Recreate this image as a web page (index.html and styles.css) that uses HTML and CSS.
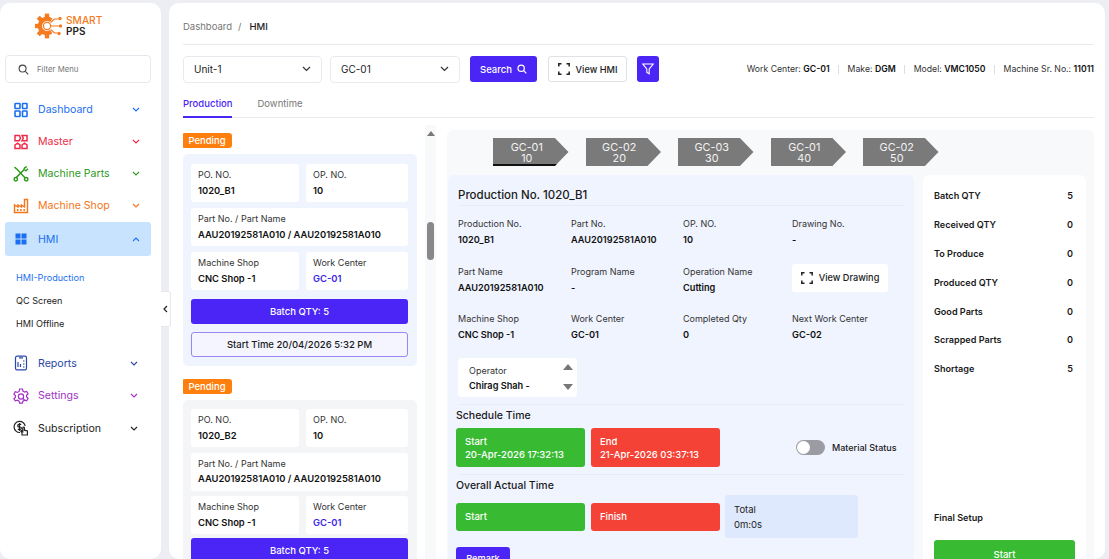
FILE: index.html
```html
<!DOCTYPE html>
<html lang="en">
<head>
<meta charset="utf-8">
<title>HMI</title>
<link rel="stylesheet" href="styles.css">
</head>
<body>
<div class="app">
  <aside class="sidebar">
    <div class="logo">
      <svg class="logo-mark" width="28" height="26" viewBox="0 0 28 26"><g fill="#f47b20"><rect x="9.8" y=".6" width="4.4" height="5"/><rect x="9.8" y=".6" width="4.4" height="5" transform="rotate(-45 12 13)"/><rect x="9.8" y=".6" width="4.4" height="5" transform="rotate(-90 12 13)"/><rect x="9.8" y=".6" width="4.4" height="5" transform="rotate(-135 12 13)"/><rect x="9.8" y=".6" width="4.4" height="5" transform="rotate(180 12 13)"/></g><circle cx="12" cy="13" r="7.2" fill="none" stroke="#f47b20" stroke-width="4.4" stroke-dasharray="70 30" pathLength="100" transform="rotate(54 12 13)"/><circle cx="12" cy="13" r="3.6" fill="#fff" stroke="#f47b20" stroke-width="1.2"/><path d="M16 13h8M15.500 9.500l4-3.500h4M15.500 16.500l4 3.500h3" fill="none" stroke="#f47b20" stroke-width="1.2"/><circle cx="25" cy="5.500" r="1.700" fill="#f47b20"/><circle cx="25.500" cy="13" r="1.700" fill="#f47b20"/><circle cx="24" cy="20.500" r="1.700" fill="#f47b20"/></svg>
      <div class="logo-text"><span class="logo-smart">SMART</span><span class="logo-pps">PPS</span></div>
    </div>
    <div class="filter-menu">
      <svg width="11" height="11" viewBox="0 0 12 12" fill="none" stroke="#444" stroke-width="1.2"><circle cx="5" cy="5" r="3.8"/><path d="M8 8l3.2 3.2"/></svg>
      <span>Filter Menu</span>
    </div>
    <nav class="nav">
      <div class="nav-item blue">
        <svg class="nav-icon" viewBox="0 0 16 16" fill="none" stroke="currentColor" stroke-width="1.6"><rect x="2" y="1.500" width="5" height="5" rx=".6"/><rect x="9.500" y="1.500" width="4.500" height="5" rx=".6"/><rect x="2" y="9" width="5" height="5.500" rx=".6"/><rect x="9.500" y="9" width="4.500" height="5.500" rx=".6"/></svg>
        <span>Dashboard</span>
        <svg class="chev" viewBox="0 0 8 5" fill="none" stroke="currentColor" stroke-width="1.1"><path d="M1 1l3 3 3-3"/></svg>
      </div>
      <div class="nav-item red">
        <svg class="nav-icon" viewBox="0 0 16 16" fill="none" stroke="currentColor" stroke-width="1.5"><path d="M2 1.500h4.200L7.500 4 6.200 6.800H2zM9 1.500h5v5.300H9l1.300-2.800zM2 11l2.500-1.800L7 11v3.500H2zM9 11l2.500-1.800L14 11v3.500H9z"/></svg>
        <span>Master</span>
        <svg class="chev" viewBox="0 0 8 5" fill="none" stroke="currentColor" stroke-width="1.1"><path d="M1 1l3 3 3-3"/></svg>
      </div>
      <div class="nav-item green">
        <svg class="nav-icon" viewBox="0 0 16 16" fill="none" stroke="currentColor" stroke-width="1.5"><path d="M1.500 1.200l2.800 2.300L12 11.800M13.800 1c-1.600-.2-3 1.100-2.800 2.700l-7.800 7.900"/><path d="M11.500 3.800l1.300 1 2.200-2" stroke-width="1.300"/><circle cx="2.800" cy="13.300" r="1.700"/><circle cx="13.200" cy="13.300" r="1.700"/></svg>
        <span>Machine Parts</span>
        <svg class="chev" viewBox="0 0 8 5" fill="none" stroke="currentColor" stroke-width="1.1"><path d="M1 1l3 3 3-3"/></svg>
      </div>
      <div class="nav-item orange">
        <svg class="nav-icon" viewBox="0 0 16 16" fill="none" stroke="currentColor" stroke-width="1.4"><path d="M1.500 14.500V7l3.500 2V7l3.500 2V7l3 2V1.500h3v13z"/><path d="M4 12h1.500M7.200 12h1.500M10.400 12h1.500" stroke-width="2"/></svg>
        <span>Machine Shop</span>
        <svg class="chev" viewBox="0 0 8 5" fill="none" stroke="currentColor" stroke-width="1.1"><path d="M1 1l3 3 3-3"/></svg>
      </div>
      <div class="nav-item blue active">
        <svg class="nav-icon" viewBox="0 0 16 16" fill="currentColor"><rect x="2.500" y="2.500" width="5" height="5"/><rect x="8.500" y="2.500" width="5" height="5"/><rect x="2.500" y="8.500" width="5" height="5"/><rect x="8.500" y="8.500" width="5" height="5"/></svg>
        <span>HMI</span>
        <svg class="chev" viewBox="0 0 8 5" fill="none" stroke="currentColor" stroke-width="1.1"><path d="M1 4l3-3 3 3"/></svg>
      </div>
      <div class="subnav">
        <a class="sub current">HMI-Production</a>
        <a class="sub">QC Screen</a>
        <a class="sub">HMI Offline</a>
      </div>
      <div class="nav-item navy tight">
        <svg class="nav-icon" viewBox="0 0 16 16" fill="none" stroke="currentColor" stroke-width="1.2"><rect x="2.500" y="1.200" width="11" height="13.600" rx="1.600"/><path d="M5 7v5M7.500 9v3M10 6h1.500M10 9h1.500M10 12h1.500M6 2.800h4"/></svg>
        <span>Reports</span>
        <svg class="chev" viewBox="0 0 8 5" fill="none" stroke="currentColor" stroke-width="1.1"><path d="M1 1l3 3 3-3"/></svg>
      </div>
      <div class="nav-item purple tight">
        <svg class="nav-icon" viewBox="0 0 16 16" fill="none" stroke="currentColor" stroke-width="1.2"><path d="M6.600 1h2.800l.5 2 1.800 1 2-.6 1.400 2.400-1.500 1.400v1.800l1.500 1.400-1.400 2.400-2-.6-1.800 1-.5 2H6.600l-.5-2-1.800-1-2 .6L.9 10.800l1.500-1.400V7.600L.9 6.200l1.400-2.400 2 .6 1.800-1z"/><circle cx="8" cy="8.500" r="2.600"/><path d="M9.800 10.400l2 2"/></svg>
        <span>Settings</span>
        <svg class="chev" viewBox="0 0 8 5" fill="none" stroke="currentColor" stroke-width="1.1"><path d="M1 1l3 3 3-3"/></svg>
      </div>
      <div class="nav-item ink tight">
        <svg class="nav-icon" viewBox="0 0 16 16" fill="none" stroke="currentColor" stroke-width="1.2"><path d="M7 12.500A5.600 5.600 0 1 1 12.200 6"/><path d="M8.200 4.400H6a1.200 1.200 0 0 0 0 2.600h1.200a1.200 1.200 0 0 1 0 2.400H4.800M6.500 3v8"/><path d="M9 15v-2L7.800 11.200l.8-.6 1.200 1V7.800a.8.8 0 0 1 1.600 0v2.400l3 .7v4.100z" fill="#fff"/></svg>
        <span>Subscription</span>
        <svg class="chev" viewBox="0 0 8 5" fill="none" stroke="currentColor" stroke-width="1.1"><path d="M1 1l3 3 3-3"/></svg>
      </div>
    </nav>
  </aside>
  <div class="collapse">
    <svg width="5" height="8" viewBox="0 0 5 8" fill="none" stroke="#222" stroke-width="1.2"><path d="M4 1L1 4l3 3"/></svg>
  </div>

  <main class="main">
    <div class="crumbs"><span class="crumb-link">Dashboard</span><span class="crumb-sep">/</span><span class="crumb-now">HMI</span></div>

    <div class="toolbar">
      <div class="select unit"><span>Unit-1</span><svg width="9" height="6" viewBox="0 0 9 6" fill="none" stroke="#333" stroke-width="1.2"><path d="M1 1l3.500 3.500L8 1"/></svg></div>
      <div class="select gc"><span>GC-01</span><svg width="9" height="6" viewBox="0 0 9 6" fill="none" stroke="#333" stroke-width="1.2"><path d="M1 1l3.500 3.500L8 1"/></svg></div>
      <button class="btn-search">Search<svg width="10" height="10" viewBox="0 0 12 12" fill="none" stroke="#fff" stroke-width="1.5"><circle cx="5" cy="5" r="3.8"/><path d="M8 8l3.200 3.200"/></svg></button>
      <button class="btn-view"><svg width="12" height="12" viewBox="0 0 12 12" fill="none" stroke="#222" stroke-width="1.5"><path d="M.8 3.500V.8h2.700M8.500.8h2.700v2.700M11.200 8.500v2.700H8.500M3.500 11.200H.8V8.500"/></svg>View HMI</button>
      <button class="btn-filter"><svg width="12" height="12" viewBox="0 0 12 12" fill="none" stroke="#fff" stroke-width="1.1"><path d="M.8 1h10.400L7.200 6v4.800L4.800 9.400V6z"/></svg></button>
      <div class="machine-info">
        <span>Work Center: <b>GC-01</b></span><i></i>
        <span>Make: <b>DGM</b></span><i></i>
        <span>Model: <b>VMC1050</b></span><i></i>
        <span>Machine Sr. No.: <b>11011</b></span>
      </div>
    </div>

    <div class="tabs">
      <span class="tab on">Production</span>
      <span class="tab">Downtime</span>
    </div>

    <div class="content">
      <section class="list">
        <span class="badge">Pending</span>
        <article class="job first">
          <div class="cells">
            <div class="cell"><label>PO. NO.</label><strong>1020_B1</strong></div>
            <div class="cell"><label>OP. NO.</label><strong>10</strong></div>
            <div class="cell full"><label>Part No. / Part Name</label><strong>AAU20192581A010 / AAU20192581A010</strong></div>
            <div class="cell"><label>Machine Shop</label><strong>CNC Shop -1</strong></div>
            <div class="cell"><label>Work Center</label><strong class="link">GC-01</strong></div>
          </div>
          <div class="batch">Batch QTY: 5</div>
          <div class="start-time">Start Time 20/04/2026 5:32 PM</div>
        </article>
        <span class="badge second">Pending</span>
        <article class="job next">
          <div class="cells">
            <div class="cell"><label>PO. NO.</label><strong>1020_B2</strong></div>
            <div class="cell"><label>OP. NO.</label><strong>10</strong></div>
            <div class="cell full"><label>Part No. / Part Name</label><strong>AAU20192581A010 / AAU20192581A010</strong></div>
            <div class="cell"><label>Machine Shop</label><strong>CNC Shop -1</strong></div>
            <div class="cell"><label>Work Center</label><strong class="link">GC-01</strong></div>
          </div>
          <div class="batch">Batch QTY: 5</div>
        </article>
      </section>

      <div class="scroll"><span class="scroll-up"></span><span class="scroll-thumb"></span></div>

      <section class="panel">
        <div class="flow">
          <div class="step current">GC-01<br>10</div>
          <div class="step">GC-02<br>20</div>
          <div class="step">GC-03<br>30</div>
          <div class="step">GC-01<br>40</div>
          <div class="step">GC-02<br>50</div>
        </div>
        <div class="panel-body">
          <div class="prod">
            <h2>Production No. 1020_B1</h2>
            <div class="facts">
              <div class="fact"><label>Production No.</label><strong>1020_B1</strong></div>
              <div class="fact"><label>Part No.</label><strong>AAU20192581A010</strong></div>
              <div class="fact"><label>OP. NO.</label><strong>10</strong></div>
              <div class="fact"><label>Drawing No.</label><strong>-</strong></div>
              <div class="fact"><label>Part Name</label><strong>AAU20192581A010</strong></div>
              <div class="fact"><label>Program Name</label><strong>-</strong></div>
              <div class="fact"><label>Operation Name</label><strong>Cutting</strong></div>
              <div class="fact"><button class="btn-drawing"><svg width="12" height="12" viewBox="0 0 12 12" fill="none" stroke="#222" stroke-width="1.5"><path d="M.8 3.500V.8h2.700M8.500.8h2.700v2.700M11.200 8.500v2.700H8.500M3.500 11.200H.8V8.500"/></svg>View Drawing</button></div>
              <div class="fact"><label>Machine Shop</label><strong>CNC Shop -1</strong></div>
              <div class="fact"><label>Work Center</label><strong>GC-01</strong></div>
              <div class="fact"><label>Completed Qty</label><strong>0</strong></div>
              <div class="fact"><label>Next Work Center</label><strong>GC-02</strong></div>
            </div>
            <div class="operator">
              <div class="op-text"><label>Operator</label><strong>Chirag Shah -</strong></div>
              <div class="op-arrows"><span class="tri-up"></span><span class="tri-down"></span></div>
            </div>
            <hr class="rule">
            <h3>Schedule Time</h3>
            <div class="times">
              <div class="time green-bg"><span>Start</span><span>20-Apr-2026 17:32:13</span></div>
              <div class="time red-bg"><span>End</span><span>21-Apr-2026 03:37:13</span></div>
              <div class="material"><span class="toggle"><span class="knob"></span></span><span class="material-label">Material Status</span></div>
            </div>
            <hr class="rule">
            <h3>Overall Actual Time</h3>
            <div class="times actual">
              <div class="time short green-bg"><span>Start</span></div>
              <div class="time short red-bg"><span>Finish</span></div>
              <div class="total"><label>Total</label><span>0m:0s</span></div>
            </div>
            <button class="btn-remark">Remark</button>
          </div>
          <aside class="stats">
            <div class="stat"><span>Batch QTY</span><span>5</span></div>
            <div class="stat"><span>Received QTY</span><span>0</span></div>
            <div class="stat"><span>To Produce</span><span>0</span></div>
            <div class="stat"><span>Produced QTY</span><span>0</span></div>
            <div class="stat"><span>Good Parts</span><span>0</span></div>
            <div class="stat"><span>Scrapped Parts</span><span>0</span></div>
            <div class="stat"><span>Shortage</span><span>5</span></div>
            <div class="final">Final Setup</div>
            <button class="btn-start">Start</button>
          </aside>
        </div>
      </section>
    </div>
  </main>
</div>
</body>
</html>
```

FILE: styles.css
```css
* { box-sizing: border-box; }
html, body { margin: 0; height: 100%; overflow: hidden; }
body { background: #eceef3; font-family: Inter, "Liberation Sans", sans-serif; color: #1a1a1a; font-size: 10px; }
label { display: block; font-weight: 400; }
button { font-family: inherit; border: 0; padding: 0; }

.app { position: relative; display: flex; gap: 8px; height: 559px; padding: 3px 4px 0 0; overflow: hidden; }

/* sidebar */
.sidebar { flex: 0 0 161px; background: #fff; border-radius: 10px; padding: 7px 10px 0 5px; height: 556px; }
.logo { display: flex; align-items: center; gap: 3px; height: 34px; padding: 0 0 3px 30px; }
.logo-text { display: flex; flex-direction: column; line-height: 11px; font-size: 10.2px; }
.logo-smart { color: #f47b20; font-weight: 500; }
.logo-pps { color: #222; font-weight: 600; font-size: 10px; }
.filter-menu { display: flex; align-items: center; gap: 8px; height: 28px; margin: 11px 0 0; padding-left: 12px; border: 1px solid #e6e8ee; border-radius: 4px; font-size: 7.8px; color: #777; }
.nav { margin-top: 10.5px; }
.nav-item { display: flex; align-items: center; height: 32px; padding: 0 11px 0 8px; font-size: 10.6px; }
.nav-item span { flex: 1; margin-left: 9px; }
.nav-icon { width: 16px; height: 16px; flex: none; }
.chev { width: 8px; height: 5px; flex: none; }
.blue { color: #1b6ff2; }
.red { color: #ee2b4b; }
.green { color: #2f9a1e; }
.orange { color: #f5761a; }
.navy { color: #2b48a8; }
.purple { color: #a031c4; }
.ink { color: #222; }
.active { height: 34px; margin-top: .5px; background: #c7e3fd; border-radius: 3px; }
.tight { height: 32.5px; padding-right: 13px; }
.subnav { display: flex; flex-direction: column; gap: 8px; padding: 14px 0 0 11px; height: 91px; font-size: 9.1px; }
.sub { line-height: 15px; color: #222; }
.subnav .current { color: #1b6ff2; }
.collapse { position: absolute; left: 161px; top: 291px; width: 10px; height: 36px; display: flex; align-items: center; justify-content: center; background: #fff; border: 1px solid #e6e8ee; border-left: 0; border-radius: 0 3px 3px 0; }

/* main */
.main { flex: 1; min-width: 0; height: 556px; background: #fff; border-radius: 10px; padding: 0 11px 0 14px; overflow: hidden; }
.crumbs { display: flex; align-items: center; gap: 6px; height: 42px; border-bottom: 1px solid #e8eaef; padding-top: 5px; font-size: 9.5px; }
.crumb-link, .crumb-sep { color: #777; }
.crumb-now { font-weight: 500; color: #222; margin-left: 2px; }
.toolbar { display: flex; align-items: center; margin-top: 10px; height: 28px; }
.select { display: flex; align-items: center; justify-content: space-between; height: 27px; padding: 0 10px; background: #fff; border: 1px solid #e8eaef; border-radius: 4px; font-size: 10px; color: #222; }
.unit { width: 139px; }
.gc { width: 130px; margin-left: 8px; }
.btn-search { display: flex; align-items: center; justify-content: center; gap: 5px; width: 67px; height: 26px; margin-left: 10px; background: #4a25f5; color: #fff; border-radius: 3px; font-size: 9.5px; font-weight: 500; }
.btn-view { display: flex; align-items: center; justify-content: center; gap: 6px; width: 79px; height: 26px; margin-left: 11px; background: #fff; color: #222; border: 1px solid #dfe1e6; border-radius: 3px; font-size: 9.2px; font-weight: 500; }
.btn-filter { display: flex; align-items: center; justify-content: center; width: 22px; height: 26px; margin-left: 10px; background: #4a25f5; border-radius: 3px; }
.machine-info { flex: 1; display: flex; justify-content: flex-end; align-items: center; gap: 8.5px; font-size: 8.7px; color: #333; }
.machine-info b { font-weight: 600; color: #111; }
.machine-info i { width: 1px; height: 9px; background: #ddd; }
.tabs { display: flex; gap: 25px; height: 29px; margin-top: 6px; border-bottom: 1px solid #e8eaef; font-size: 9.5px; color: #777; }
.tab { padding-top: 9px; height: 29px; }
.on { color: #4a25f5; font-weight: 500; border-bottom: 2px solid #4a25f5; }

.content { display: flex; height: 441px; }
.list { width: 234px; padding-top: 15px; overflow: hidden; }
.badge { display: block; width: 50px; height: 15px; margin-left: -1px; background: #ff7f0e; color: #fff; border-radius: 3px; font-size: 9.5px; font-weight: 500; line-height: 15px; text-align: center; }
.second { margin-top: 13px; }
.job { margin-top: 6px; padding: 10px 9px 9px 8px; background: #f4f5f7; border-radius: 5px; }
.first { background: #f0f4ff; height: 212px; }
.next { padding-top: 9px; height: 200px; }
.cells { display: grid; grid-template-columns: 108px 102px; gap: 6px 7px; }
.next .cells { row-gap: 5.5px; }
.cell { height: 38px; padding: 3px 7px; background: #fff; border-radius: 3px; font-size: 9px; line-height: 15.5px; color: #333; }
.cell strong { display: block; font-size: 9.4px; font-weight: 600; color: #111; white-space: nowrap; }
.cell .link { color: #3a25e8; }
.full { grid-column: 1 / -1; }
.batch { height: 25px; margin-top: 9px; background: #4a25f5; color: #fff; border-radius: 3px; font-size: 9.5px; font-weight: 500; line-height: 25px; text-align: center; }
.next .batch { margin-top: 4px; }
.start-time { height: 25px; margin-top: 8px; background: #f4f5ff; border: 1px solid #9a85f5; border-radius: 3px; font-size: 9.5px; font-weight: 500; line-height: 23px; text-align: center; }

.scroll { display: flex; flex-direction: column; align-items: center; width: 11px; margin: 7px 11px 0 8px; background: #f8f9fb; }
.scroll-up { width: 0; height: 0; margin-top: 6px; border: 4px solid transparent; border-top: 0; border-bottom: 5px solid #777; }
.scroll-thumb { width: 7px; height: 38px; margin-top: 86px; background: #888; border-radius: 4px; }

.panel { flex: 1; min-width: 0; margin-top: 12px; padding: 8px 8px 0 1px; background: #f7f9fb; border-radius: 6px 6px 0 0; }
.flow { display: flex; gap: 17px; height: 28px; padding-left: 45px; }
.step { width: 75.5px; height: 28px; padding: 3.5px 8px 0 0; background: #7a7a7a; color: #f2f2f2; font-size: 10.8px; line-height: 11px; text-align: center; clip-path: polygon(0 0, 82% 0, 100% 50%, 82% 100%, 0 100%); }
.step.current { border-bottom: 2px solid #111; }
.panel-body { display: flex; gap: 9px; margin-top: 9px; }
.prod { width: 466px; height: 400px; padding: 10px 10px 0 10px; background: #f0f4ff; border-radius: 6px; }
.prod h2 { margin: 0; height: 21px; font-size: 11.5px; font-weight: 500; line-height: 20px; color: #1a1a1a; border-bottom: 1px solid #e8ecf5; }
.facts { display: grid; grid-template-columns: 113px 112px 109px 1fr; grid-auto-rows: 32px; row-gap: 15.5px; margin-top: 10px; font-size: 9px; }
.fact { line-height: 16px; color: #333; }
.fact strong { display: block; font-size: 9.2px; font-weight: 600; color: #111; white-space: nowrap; }
.btn-drawing { display: flex; align-items: center; justify-content: center; gap: 6px; width: 96px; height: 28px; background: #fff; border-radius: 3px; color: #222; font-size: 9.2px; font-weight: 500; }
.operator { display: flex; justify-content: space-between; width: 119px; height: 39px; margin-top: 15px; padding: 5px 4px 0 11px; background: #fff; border-radius: 4px; font-size: 9px; line-height: 15px; color: #333; }
.operator strong { display: block; font-size: 9.2px; font-weight: 600; color: #111; }
.op-arrows { display: flex; flex-direction: column; gap: 14px; padding-top: 1px; }
.tri-up { width: 0; height: 0; border: 5px solid transparent; border-top: 0; border-bottom: 6px solid #777; }
.tri-down { width: 0; height: 0; border: 5px solid transparent; border-bottom: 0; border-top: 6px solid #777; }
.rule { height: 1px; margin: 7px 0 0; border: 0; background: #e8ecf5; }
.prod h3 { margin: 3px 0 0 -2px; height: 16px; font-size: 10.5px; font-weight: 500; line-height: 16px; color: #1a1a1a; }
.times { display: flex; align-items: flex-start; gap: 6px; margin: 4px 0 0 -2px; }
.time { display: flex; flex-direction: column; justify-content: center; width: 129px; height: 39px; padding-left: 9px; border-radius: 3px; color: #fff; font-size: 9.5px; font-weight: 500; line-height: 13px; }
.green-bg { background: #38bb33; }
.red-bg { background: #f44336; }
.material { display: flex; align-items: center; gap: 7px; margin: 12px 0 0 70px; }
.toggle { display: block; width: 29px; height: 15px; padding: 1px; background: #9b9ca3; border-radius: 8px; }
.knob { display: block; width: 13px; height: 13px; background: #fff; border-radius: 50%; }
.material-label { font-size: 9px; font-weight: 500; color: #222; white-space: nowrap; }
.actual { align-items: center; margin-top: 1px; }
.short { height: 28px; }
.total { display: flex; flex-direction: column; justify-content: center; width: 133px; height: 43px; margin-left: -1px; padding-left: 9px; background: #dfe9fd; border-radius: 3px; font-size: 9.5px; line-height: 15px; color: #222; }
.btn-remark { display: block; width: 54px; height: 22px; margin: 9px 0 0 -2px; background: #4a25f5; color: #fff; border-radius: 3px; font-size: 9.2px; font-weight: 500; }
.stats { width: 163px; height: 400px; padding: 6.500px 13px 0 11px; background: #fff; border-radius: 6px; font-size: 9.1px; font-weight: 600; color: #1a1a1a; }
.stat { display: flex; justify-content: space-between; align-items: center; height: 28.800px; }
.final { margin-top: 128.300px; height: 14px; line-height: 14px; }
.btn-start { display: block; width: 141px; height: 28px; margin: 15px 0 0; background: #38bb33; color: #fff; border-radius: 3px; font-size: 9.5px; font-weight: 500; }
```
